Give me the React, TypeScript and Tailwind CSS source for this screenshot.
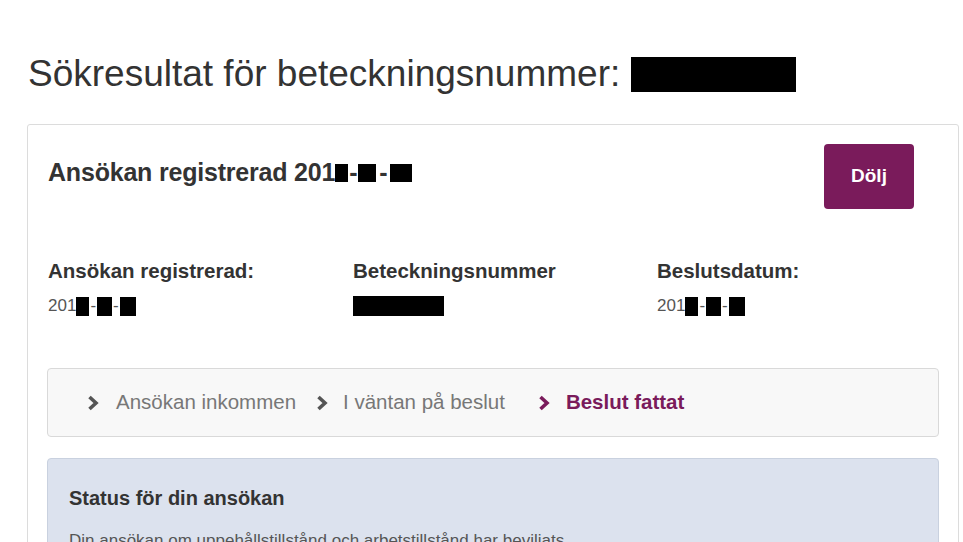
import React from "react";

const Redact = ({ w, h }: { w: string; h: string }) => (
  <span className={`inline-block bg-black align-middle ${w} ${h}`} />
);

function Chevron({ color }: { color: string }) {
  return (
    <svg width="12" height="16" viewBox="0 0 12 16" className="shrink-0">
      <path d="M2.5 2 L9 8 L2.5 14" fill="none" stroke={color} strokeWidth="3.6" strokeLinejoin="miter" />
    </svg>
  );
}

export default function App() {
  return (
    <div
      className="h-[542px] w-[963px] overflow-hidden bg-white text-[#333]"
      style={{ fontFamily: '"Liberation Sans", Arial, sans-serif' }}
    >
      {/* Page title */}
      <h1 className="pl-[28px] pt-[50px] text-[37px] leading-[48px] font-normal text-[#333] flex items-center">
        <span>Sökresultat för beteckningsnummer:</span>
        <span className="ml-[11px] inline-block w-[165px] h-[35px] bg-black" />
      </h1>

      {/* Card */}
      <div className="ml-[27px] mr-[4px] mt-[26px] border border-[#dcdcdc] rounded-t-[3px] h-[500px]">
        {/* Header */}
        <div className="flex items-center justify-between pl-[20px] pr-[44px] pt-[19px]">
          <div className="text-[25px] font-bold text-[#333] tracking-[-0.2px] flex items-center -mt-[8px]">
            <span>Ansökan registrerad 201</span>
            <Redact w="w-[13px]" h="h-[18px]" />
            <span className="px-[1px]">-</span>
            <Redact w="w-[18px]" h="h-[18px]" />
            <span className="px-[3px]">-</span>
            <Redact w="w-[22px]" h="h-[18px]" />
          </div>
          <button className="w-[90px] h-[65px] rounded-[4px] bg-[#7a1b5b] text-white font-bold text-[19px]">
            Dölj
          </button>
        </div>

        {/* Info grid */}
        <div className="grid grid-cols-[305px_304px_1fr] pl-[20px] mt-[50px]">
          <div>
            <div className="text-[20.5px] font-bold leading-[24px] text-[#333]">Ansökan registrerad:</div>
            <div className="mt-[13px] text-[17px] leading-[20px] text-[#555] flex items-center">
              <span>201</span>
              <Redact w="w-[13px]" h="h-[19px]" />
              <span className="px-[1px]">-</span>
              <Redact w="w-[15px]" h="h-[19px]" />
              <span className="px-[1px]">-</span>
              <Redact w="w-[16px]" h="h-[19px]" />
            </div>
          </div>
          <div>
            <div className="text-[20.5px] font-bold leading-[24px] text-[#333]">Beteckningsnummer</div>
            <div className="mt-[13px] h-[20px] flex items-center">
              <Redact w="w-[91px]" h="h-[20px]" />
            </div>
          </div>
          <div>
            <div className="text-[20.5px] font-bold leading-[24px] text-[#333]">Beslutsdatum:</div>
            <div className="mt-[13px] text-[17px] leading-[20px] text-[#555] flex items-center">
              <span>201</span>
              <Redact w="w-[13px]" h="h-[19px]" />
              <span className="px-[1px]">-</span>
              <Redact w="w-[15px]" h="h-[19px]" />
              <span className="px-[1px]">-</span>
              <Redact w="w-[16px]" h="h-[19px]" />
            </div>
          </div>
        </div>

        {/* Progress breadcrumb */}
        <div className="mx-[19px] mt-[52px] h-[69px] rounded-[4px] border border-[#d9d9d9] bg-[#f8f8f8] flex items-center pl-[39px] text-[20.5px]">
          <Chevron color="#555" />
          <span className="ml-[17px] text-[#777]">Ansökan inkommen</span>
          <span className="ml-[20px]"><Chevron color="#555" /></span>
          <span className="ml-[15px] text-[#777]">I väntan på beslut</span>
          <span className="ml-[33px]"><Chevron color="#7a1b5b" /></span>
          <span className="ml-[16px] font-bold text-[#7a1b5b]">Beslut fattat</span>
        </div>

        {/* Status */}
        <div className="mx-[19px] mt-[21px] rounded-[4px] border border-[#c9d1df] bg-[#dce2ee] pl-[21px] pt-[27px] h-[200px]">
          <div className="text-[20px] font-bold text-[#333] leading-[24px]">Status för din ansökan</div>
          <div className="mt-[18px] text-[17px] text-[#555]">
            Din ansökan om uppehållstillstånd och arbetstillstånd har beviljats.
          </div>
        </div>
      </div>
    </div>
  );
}
